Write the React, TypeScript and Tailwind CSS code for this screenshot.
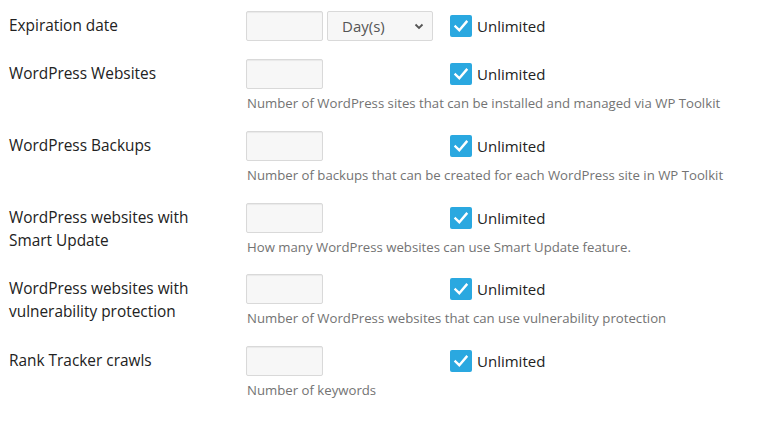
import React from "react";

function Check() {
  return (
    <label className="flex items-center gap-[5px]">
      <span className="flex h-[22px] w-[22px] items-center justify-center rounded-[2px] bg-[#2aa8e0]">
        <svg width="16" height="16" viewBox="0 0 16 16">
          <path d="M2.5 8.5 L6.3 12.2 L13.5 3.8" fill="none" stroke="#fff" strokeWidth="2.4" strokeLinecap="square" />
        </svg>
      </span>
      <span className="text-[15px] leading-[22px] text-[#222]">Unlimited</span>
    </label>
  );
}

function Input() {
  return (
    <div className="h-[30px] w-[77px] rounded-[2px] border border-[#d9d9d9] bg-[#f7f7f7] shadow-[inset_0_1px_1px_rgba(0,0,0,0.06)]" />
  );
}

type Row = { label: string[]; hint?: string; select?: boolean };

const rows: Row[] = [
  { label: ["Expiration date"], select: true },
  { label: ["WordPress Websites"], hint: "Number of WordPress sites that can be installed and managed via WP Toolkit" },
  { label: ["WordPress Backups"], hint: "Number of backups that can be created for each WordPress site in WP Toolkit" },
  { label: ["WordPress websites with", "Smart Update"], hint: "How many WordPress websites can use Smart Update feature." },
  { label: ["WordPress websites with", "vulnerability protection"], hint: "Number of WordPress websites that can use vulnerability protection" },
  { label: ["Rank Tracker crawls"], hint: "Number of keywords" },
];

export default function App() {
  return (
    <div className="min-h-[425px] w-[783px] bg-white pt-[11px]" style={{ fontFamily: '"Open Sans", sans-serif' }}>
      {rows.map((r, i) => (
        <div key={i} className="flex pb-[18px]">
          <div className="w-[246px] shrink-0 pl-[9px] pt-[3px] text-[15.4px] leading-[23px] text-[#222]">
            {r.label.map((l, j) => (
              <div key={j}>{l}</div>
            ))}
          </div>
          <div className="flex flex-col">
            <div className="flex items-center">
              <div className="flex w-[204px] items-center gap-[4px]">
                <Input />
                {r.select && (
                  <div className="flex h-[30px] w-[106px] items-center justify-between rounded-[2px] border border-[#d9d9d9] bg-[#f7f7f7] pl-[14px] pr-[8px] text-[15px] text-[#555]">
                    <span>Day(s)</span>
                    <svg width="10" height="10" viewBox="0 0 10 10">
                      <path d="M1.5 3.5 L5 7 L8.5 3.5" fill="none" stroke="#555" strokeWidth="1.8" />
                    </svg>
                  </div>
                )}
              </div>
              <Check />
            </div>
            {r.hint && (
              <div className="mt-[5px] whitespace-nowrap pl-[1px] text-[13.2px] leading-[18.8px] text-[#737373]">{r.hint}</div>
            )}
          </div>
        </div>
      ))}
    </div>
  );
}
